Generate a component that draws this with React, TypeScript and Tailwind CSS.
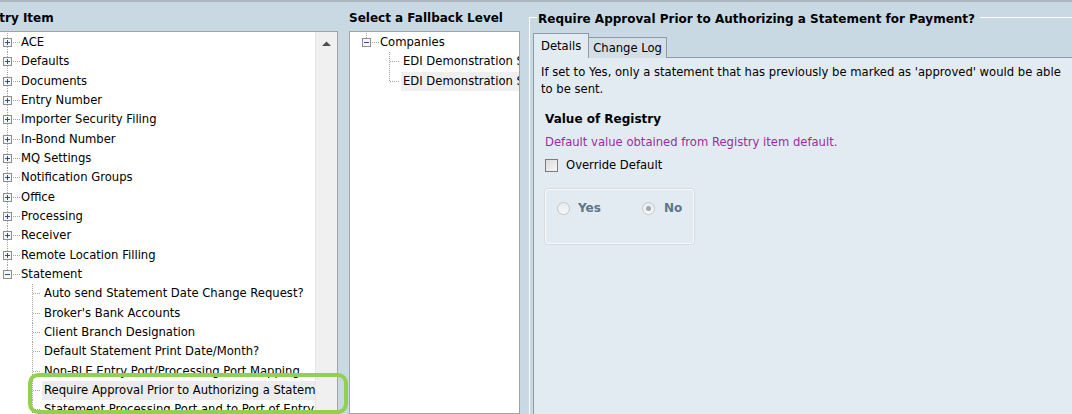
import React from 'react';

const registryItems = [
  'ACE',
  'Defaults',
  'Documents',
  'Entry Number',
  'Importer Security Filing',
  'In-Bond Number',
  'MQ Settings',
  'Notification Groups',
  'Office',
  'Processing',
  'Receiver',
  'Remote Location Filling',
];

const statementChildren = [
  'Auto send Statement Date Change Request?',
  "Broker's Bank Accounts",
  'Client Branch Designation',
  'Default Statement Print Date/Month?',
  'Non-BLE Entry Port/Processing Port Mapping',
  'Require Approval Prior to Authorizing a Statement for Payment?',
  'Statement Processing Port and to Port of Entry',
];

const SELECTED = 'Require Approval Prior to Authorizing a Statement for Payment?';

// expander box + dotted connectors for a top level node
const NodeGlyph = ({ open, last, x }: { open?: boolean; last?: boolean; x: number }) => (
  <svg width={x + 18} height="19" viewBox={`0 0 ${x + 18} 19`} className="shrink-0">
    <g stroke="#a3a3a3" strokeDasharray="1 1">
      <path d={`M${x + 4.5} 0V5`} />
      {!last && <path d={`M${x + 4.5} 14V19`} />}
      <path d={`M${x + 10} 9.5H${x + 17}`} />
    </g>
    <rect x={x + 0.5} y="5.5" width="8" height="8" fill="#f7f7f7" stroke="#8e8e8e" />
    <path d={`M${x + 2} 9.5H${x + 7}`} stroke="#2e4f91" />
    {!open && <path d={`M${x + 4.5} 7V12`} stroke="#2e4f91" />}
  </svg>
);

const LeafGlyph = ({ line, width, last }: { line: number; width: number; last?: boolean }) => (
  <svg width={width} height="19" viewBox={`0 0 ${width} 19`} className="shrink-0">
    <g stroke="#a3a3a3" strokeDasharray="1 1">
      <path d={`M${line + 0.5} 0V${last ? 9.5 : 19}`} />
      <path d={`M${line + 1} 9.5H${width - 2}`} />
    </g>
  </svg>
);

const Radio = ({ checked }: { checked?: boolean }) => (
  <span className="w-[13px] h-[13px] rounded-full border border-[#c3c7ca] bg-gradient-to-b from-[#e9ebec] to-[#f7f7f7] flex items-center justify-center shrink-0">
    {checked && <span className="w-[5px] h-[5px] rounded-full bg-[#a2a6a9]" />}
  </span>
);

export default function App() {
  return (
    <div className="relative w-[1072px] h-[414px] overflow-hidden bg-[#c9d9e4] border-t-2 border-[#aab5be] flex font-['DejaVu_Sans',Verdana,sans-serif] text-[11.6px] text-black">
      {/* Registry items */}
      <div className="w-[338px] flex flex-col shrink-0">
        <div className="h-[29px] overflow-hidden pt-[7px] whitespace-nowrap">
          <span className="block ml-[-38px] font-bold text-[12px]">Registry Item</span>
        </div>
        <div className="flex-1 flex bg-white border-t border-r border-[#a3a3a3] min-h-0">
          <div className="w-[315px] overflow-hidden pt-[1px]">
            {registryItems.map((item) => (
              <div key={item} className="h-[19.33px] flex items-center whitespace-nowrap">
                <NodeGlyph x={3} />
                <span>{item}</span>
              </div>
            ))}
            <div className="h-[19.33px] flex items-center whitespace-nowrap">
              <NodeGlyph x={3} open last />
              <span>Statement</span>
            </div>
            {statementChildren.map((item) => (
              <div key={item} className="h-[19.33px] flex items-center whitespace-nowrap">
                <LeafGlyph line={32} width={42} />
                <span className={item === SELECTED ? 'flex-1 h-full flex items-center pl-[2px] bg-[#ececec] overflow-hidden' : 'pl-[2px]'}>
                  {item}
                </span>
              </div>
            ))}
          </div>
          <div className="w-[22px] bg-[#f0f0f0] border-l border-[#e6e6e6] flex flex-col items-center">
            <svg width="9" height="5" viewBox="0 0 9 5" className="mt-[9px]">
              <path d="M0 5L4.5 0.5L9 5Z" fill="#505050" />
            </svg>
          </div>
        </div>
      </div>

      {/* Fallback levels */}
      <div className="w-[171px] ml-[11px] flex flex-col shrink-0">
        <div className="h-[29px] pt-[7px] font-bold text-[12px] whitespace-nowrap">Select a Fallback Level</div>
        <div className="flex-1 bg-white border border-[#a3a3a3] overflow-hidden pt-[1px]">
          <div className="h-[19.33px] flex items-center whitespace-nowrap">
            <NodeGlyph x={12} open last />
            <span>Companies</span>
          </div>
          <div className="h-[19.33px] flex items-center whitespace-nowrap">
            <LeafGlyph line={39} width={51} />
            <span className="pl-[2px]">EDI Demonstration Services</span>
          </div>
          <div className="h-[19.33px] flex items-center whitespace-nowrap">
            <LeafGlyph line={39} width={51} last />
            <span className="flex-1 h-full flex items-center pl-[2px] bg-[#efefef] overflow-hidden">EDI Demonstration Services</span>
          </div>
        </div>
      </div>

      {/* Details */}
      <div className="flex-1 ml-[9px] flex flex-col min-w-0">
        <div className="h-[31px] flex shrink-0">
          <div className="w-[8px] mt-[15px] border-t border-l border-white" />
          <div className="pt-[8px] px-[1px] font-bold text-[12px] whitespace-nowrap">
            Require Approval Prior to Authorizing a Statement for Payment?
          </div>
          <div className="flex-1 mt-[15px] ml-[4px] border-t border-white" />
        </div>
        <div className="flex-1 border-l border-white pl-[3px] flex flex-col min-h-0">
          <div className="relative z-10 -mb-px flex items-end h-[25px] shrink-0">
            <div className="h-[25px] px-[7px] pt-[4px] bg-[#e3ebf2] border border-b-0 border-[#8f9ba6]">Details</div>
            <div className="h-[21px] px-[4px] pt-[2px] bg-[#d4dee7] border border-l-0 border-b-0 border-[#8f9ba6]">Change Log</div>
          </div>
          <div className="flex-1 bg-[#e3ebf2] border-t border-l border-[#8f9ba6] pl-[7px] pt-[6px] pr-[4px]">
            <p className="leading-[17px]">
              If set to Yes, only a statement that has previously be marked as 'approved' would be able to be sent.
            </p>
            <div className="pl-[4px]">
              <div className="mt-[13px] leading-[17px] font-bold text-[12px]">Value of Registry</div>
              <div className="mt-[6px] leading-[17px] text-[#9b2c9e]">Default value obtained from Registry item default.</div>
              <label className="mt-[6px] h-[17px] flex items-center gap-[8px]">
                <span className="w-[13px] h-[13px] border border-[#7d7d7d] bg-gradient-to-br from-[#dcdcdc] to-[#f6f6f6]" />
                <span>Override Default</span>
              </label>
              <div className="mt-[15px] w-[149px] h-[55px] rounded-[3px] border border-[#f7f9fb] shadow-[0_0_0_1px_#d3dce3] pl-[11px] pt-[10px]">
                <div className="flex items-center h-[16px] font-bold text-[12px] text-[#5f7487]">
                  <div className="w-[85px] flex items-center gap-[8px]">
                    <Radio />
                    <span>Yes</span>
                  </div>
                  <div className="flex items-center gap-[9px]">
                    <Radio checked />
                    <span>No</span>
                  </div>
                </div>
              </div>
            </div>
          </div>
        </div>
      </div>

      {/* highlight callout */}
      <div className="absolute left-[28px] top-[371px] w-[320px] h-[41px] border-4 border-[#92d050] rounded-[10px]" />
    </div>
  );
}
